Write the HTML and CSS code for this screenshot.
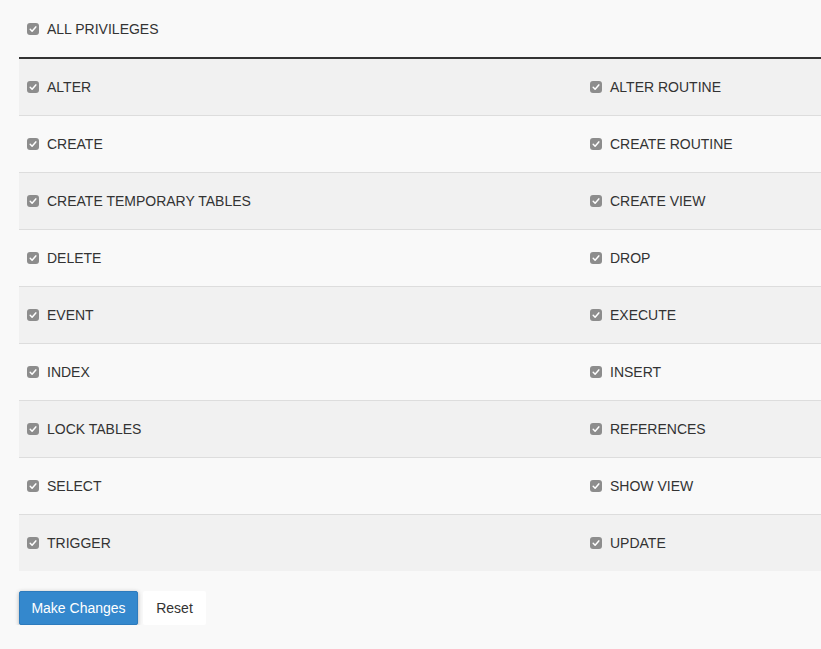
FILE: index.html
```html
<!DOCTYPE html>
<html>
<head>
<meta charset="utf-8">
<link rel="stylesheet" href="styles.css">
</head>
<body>
<div class="page">
  <div class="head-row">
    <label class="item"><span class="cb"><svg viewBox="0 0 12 12"><path d="M3.2 6.3 L5.1 8.2 L8.8 3.9" /></svg></span>ALL PRIVILEGES</label>
  </div>
  <div class="rows">
    <div class="row odd"><label class="item c1"><span class="cb"><svg viewBox="0 0 12 12"><path d="M3.2 6.3 L5.1 8.2 L8.8 3.9" /></svg></span>ALTER</label><label class="item"><span class="cb"><svg viewBox="0 0 12 12"><path d="M3.2 6.3 L5.1 8.2 L8.8 3.9" /></svg></span>ALTER ROUTINE</label></div>
    <div class="row"><label class="item c1"><span class="cb"><svg viewBox="0 0 12 12"><path d="M3.2 6.3 L5.1 8.2 L8.8 3.9" /></svg></span>CREATE</label><label class="item"><span class="cb"><svg viewBox="0 0 12 12"><path d="M3.2 6.3 L5.1 8.2 L8.8 3.9" /></svg></span>CREATE ROUTINE</label></div>
    <div class="row odd"><label class="item c1"><span class="cb"><svg viewBox="0 0 12 12"><path d="M3.2 6.3 L5.1 8.2 L8.8 3.9" /></svg></span>CREATE TEMPORARY TABLES</label><label class="item"><span class="cb"><svg viewBox="0 0 12 12"><path d="M3.2 6.3 L5.1 8.2 L8.8 3.9" /></svg></span>CREATE VIEW</label></div>
    <div class="row"><label class="item c1"><span class="cb"><svg viewBox="0 0 12 12"><path d="M3.2 6.3 L5.1 8.2 L8.8 3.9" /></svg></span>DELETE</label><label class="item"><span class="cb"><svg viewBox="0 0 12 12"><path d="M3.2 6.3 L5.1 8.2 L8.8 3.9" /></svg></span>DROP</label></div>
    <div class="row odd"><label class="item c1"><span class="cb"><svg viewBox="0 0 12 12"><path d="M3.2 6.3 L5.1 8.2 L8.8 3.9" /></svg></span>EVENT</label><label class="item"><span class="cb"><svg viewBox="0 0 12 12"><path d="M3.2 6.3 L5.1 8.2 L8.8 3.9" /></svg></span>EXECUTE</label></div>
    <div class="row"><label class="item c1"><span class="cb"><svg viewBox="0 0 12 12"><path d="M3.2 6.3 L5.1 8.2 L8.8 3.9" /></svg></span>INDEX</label><label class="item"><span class="cb"><svg viewBox="0 0 12 12"><path d="M3.2 6.3 L5.1 8.2 L8.8 3.9" /></svg></span>INSERT</label></div>
    <div class="row odd"><label class="item c1"><span class="cb"><svg viewBox="0 0 12 12"><path d="M3.2 6.3 L5.1 8.2 L8.8 3.9" /></svg></span>LOCK TABLES</label><label class="item"><span class="cb"><svg viewBox="0 0 12 12"><path d="M3.2 6.3 L5.1 8.2 L8.8 3.9" /></svg></span>REFERENCES</label></div>
    <div class="row"><label class="item c1"><span class="cb"><svg viewBox="0 0 12 12"><path d="M3.2 6.3 L5.1 8.2 L8.8 3.9" /></svg></span>SELECT</label><label class="item"><span class="cb"><svg viewBox="0 0 12 12"><path d="M3.2 6.3 L5.1 8.2 L8.8 3.9" /></svg></span>SHOW VIEW</label></div>
    <div class="row odd"><label class="item c1"><span class="cb"><svg viewBox="0 0 12 12"><path d="M3.2 6.3 L5.1 8.2 L8.8 3.9" /></svg></span>TRIGGER</label><label class="item"><span class="cb"><svg viewBox="0 0 12 12"><path d="M3.2 6.3 L5.1 8.2 L8.8 3.9" /></svg></span>UPDATE</label></div>
  </div>
  <div class="actions">
    <button class="btn primary">Make Changes</button>
    <button class="btn plain">Reset</button>
  </div>
</div>
</body>
</html>
```
FILE: styles.css
```css
html, body {
  margin: 0;
  padding: 0;
  background: #f9f9f9;
  overflow: hidden;
}
body {
  font-family: "Liberation Sans", Arial, sans-serif;
  font-size: 14px;
  color: #333;
}
.page {
  padding-left: 19px;
}
.head-row {
  height: 57px;
  display: flex;
  align-items: center;
  padding-left: 8px;
  border-bottom: 2px solid #333;
}
.row {
  height: 56px;
  display: flex;
  align-items: center;
  padding-left: 8px;
  border-top: 1px solid #ddd;
}
.rows .row:first-child {
  border-top: none;
}
.row.odd {
  background: #f1f1f1;
}
.item {
  display: flex;
  align-items: center;
  line-height: 20px;
  white-space: nowrap;
}
.item.c1 {
  width: 563px;
  flex-shrink: 0;
}
.cb {
  width: 12px;
  height: 12px;
  border-radius: 3px;
  background: #8d8d8d;
  margin-right: 8px;
  display: inline-flex;
  flex-shrink: 0;
}
.cb svg {
  width: 12px;
  height: 12px;
}
.cb path {
  fill: none;
  stroke: #fff;
  stroke-width: 1.5;
  stroke-linecap: round;
  stroke-linejoin: round;
}
.actions {
  display: flex;
  gap: 5px;
  margin-top: 20px;
}
.btn {
  font-family: "Liberation Sans", Arial, sans-serif;
  font-size: 14px;
  height: 34px;
  border: none;
  border-radius: 2px;
  padding: 0;
  white-space: nowrap;
  cursor: pointer;
}
.btn.primary {
  background: #3488cd;
  color: #fff;
  border: 1px solid #2d7bbd;
  width: 119px;
  box-shadow: 0 1px 4px rgba(0, 0, 0, 0.3);
}
.btn.plain {
  background: #fff;
  color: #333;
  width: 63px;
}
```
